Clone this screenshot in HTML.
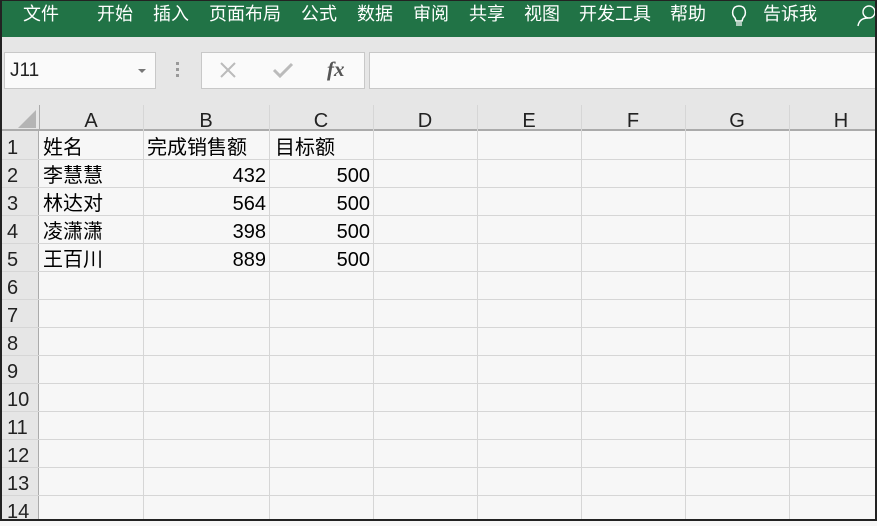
<!DOCTYPE html>
<html><head><meta charset="utf-8"><style>
*{margin:0;padding:0;box-sizing:border-box}
body{width:877px;height:521px;overflow:hidden;background:#f7f7f7;font-family:"Liberation Sans","Noto Sans CJK SC",sans-serif;position:relative}
.a{position:absolute}
.menu{color:#fff;font-size:18px;top:3px;white-space:nowrap;line-height:22px}
.vl{position:absolute;top:105px;bottom:0;width:1px;background:#d6d6d6}
.hl{position:absolute;left:2px;right:2px;height:1px;background:#d6d6d6}
.ch{position:absolute;top:107px;height:26px;line-height:28px;font-size:20px;color:#222;text-align:center}
.rn{position:absolute;left:7px;font-size:20px;color:#222;line-height:28px}
.c{position:absolute;font-size:20px;color:#000;line-height:28px;white-space:nowrap}
.r{text-align:right}
</style></head><body>
<div class="a" style="left:0;top:0;width:877px;height:37px;background:#217346"></div>
<div class="a menu" style="left:23px">文件</div>
<div class="a menu" style="left:97px">开始</div>
<div class="a menu" style="left:153px">插入</div>
<div class="a menu" style="left:209px">页面布局</div>
<div class="a menu" style="left:301px">公式</div>
<div class="a menu" style="left:357px">数据</div>
<div class="a menu" style="left:413px">审阅</div>
<div class="a menu" style="left:469px">共享</div>
<div class="a menu" style="left:524px">视图</div>
<div class="a menu" style="left:579px">开发工具</div>
<div class="a menu" style="left:670px">帮助</div>
<svg class="a" style="left:729px;top:3px" width="20" height="24" viewBox="0 0 20 24"><path d="M6 15 C2 11 3 3 10 3 C17 3 18 11 14 15 L13 18 L7 18 Z" fill="none" stroke="#fff" stroke-width="1.5"/><path d="M7 20h6M7 22h6" stroke="#fff" stroke-width="1.3"/></svg>
<div class="a menu" style="left:763px">告诉我</div>
<svg class="a" style="left:856px;top:4px" width="21" height="24" viewBox="0 0 21 24"><circle cx="13" cy="8" r="6" fill="none" stroke="#fff" stroke-width="1.4"/><path d="M2 22 C3 16 7 14 12 14" fill="none" stroke="#fff" stroke-width="1.4"/></svg>
<div class="a" style="left:0;top:37px;width:877px;height:68px;background:#e6e6e6"></div>
<div class="a" style="left:4px;top:52px;width:152px;height:37px;background:#fafafa;border:1px solid #c8c8c8"></div>
<div class="a" style="left:10px;top:60px;font-size:19px;color:#222">J11</div>
<div class="a" style="left:138px;top:69px;width:0;height:0;border-left:4px solid transparent;border-right:4px solid transparent;border-top:4px solid #777"></div>
<div class="a" style="left:176px;top:62px;width:3px;height:3px;background:#999;box-shadow:0 6px #999,0 12px #999"></div>
<div class="a" style="left:201px;top:52px;width:164px;height:37px;background:#fafafa;border:1px solid #c8c8c8"></div>
<svg class="a" style="left:218px;top:60px" width="22" height="20"><path d="M3 3L17 17M17 3L3 17" stroke="#bbb" stroke-width="2"/></svg>
<svg class="a" style="left:272px;top:60px" width="24" height="20"><path d="M2 10L8 16L20 4" fill="none" stroke="#bbb" stroke-width="3"/></svg>
<div class="a" style="left:327px;top:57px;font-family:'Liberation Serif',serif;font-style:italic;font-weight:bold;font-size:21px;color:#555">fx</div>
<div class="a" style="left:369px;top:52px;width:510px;height:37px;background:#fafafa;border:1px solid #c8c8c8"></div>
<div class="a" style="left:2px;top:105px;width:873px;height:26px;background:#e6e6e6;border-bottom:2px solid #ababab"></div>
<div class="a" style="left:2px;top:131px;width:37px;height:390px;background:#e6e6e6;border-right:1px solid #ababab"></div>
<svg class="a" style="left:16px;top:108px" width="22" height="22"><path d="M20 2L20 20L2 20Z" fill="#b4b4b4"/></svg>
<div class="vl" style="left:39px;background:#ababab;height:26px"></div>
<div class="vl" style="left:143px"></div><div class="vl" style="left:269px"></div><div class="vl" style="left:373px"></div><div class="vl" style="left:477px"></div><div class="vl" style="left:581px"></div><div class="vl" style="left:685px"></div><div class="vl" style="left:789px"></div>
<div class="ch" style="left:39px;width:104px">A</div><div class="ch" style="left:143px;width:126px">B</div><div class="ch" style="left:269px;width:104px">C</div><div class="ch" style="left:373px;width:104px">D</div><div class="ch" style="left:477px;width:104px">E</div><div class="ch" style="left:581px;width:104px">F</div><div class="ch" style="left:685px;width:104px">G</div><div class="ch" style="left:789px;width:104px">H</div>
<div class="hl" style="top:159px"></div><div class="hl" style="top:187px"></div><div class="hl" style="top:215px"></div><div class="hl" style="top:243px"></div><div class="hl" style="top:271px"></div><div class="hl" style="top:299px"></div><div class="hl" style="top:327px"></div><div class="hl" style="top:355px"></div><div class="hl" style="top:383px"></div><div class="hl" style="top:411px"></div><div class="hl" style="top:439px"></div><div class="hl" style="top:467px"></div><div class="hl" style="top:495px"></div>
<div class="rn" style="top:134px">1</div><div class="rn" style="top:162px">2</div><div class="rn" style="top:190px">3</div><div class="rn" style="top:218px">4</div><div class="rn" style="top:246px">5</div><div class="rn" style="top:274px">6</div><div class="rn" style="top:302px">7</div><div class="rn" style="top:330px">8</div><div class="rn" style="top:358px">9</div><div class="rn" style="top:386px">10</div><div class="rn" style="top:414px">11</div><div class="rn" style="top:442px">12</div><div class="rn" style="top:470px">13</div><div class="rn" style="top:498px">14</div>
<div class="c" style="left:43px;top:134px">姓名</div><div class="c" style="left:147px;top:134px">完成销售额</div><div class="c" style="left:275px;top:134px">目标额</div>
<div class="c" style="left:43px;top:162px">李慧慧</div><div class="c r" style="left:143px;width:123px;top:162px">432</div><div class="c r" style="left:269px;width:101px;top:162px">500</div>
<div class="c" style="left:43px;top:190px">林达对</div><div class="c r" style="left:143px;width:123px;top:190px">564</div><div class="c r" style="left:269px;width:101px;top:190px">500</div>
<div class="c" style="left:43px;top:218px">凌潇潇</div><div class="c r" style="left:143px;width:123px;top:218px">398</div><div class="c r" style="left:269px;width:101px;top:218px">500</div>
<div class="c" style="left:43px;top:246px">王百川</div><div class="c r" style="left:143px;width:123px;top:246px">889</div><div class="c r" style="left:269px;width:101px;top:246px">500</div>
<div class="a" style="left:0;top:0;width:877px;height:521px;border:2px solid #222;border-top-width:1px"></div>
</body></html>
